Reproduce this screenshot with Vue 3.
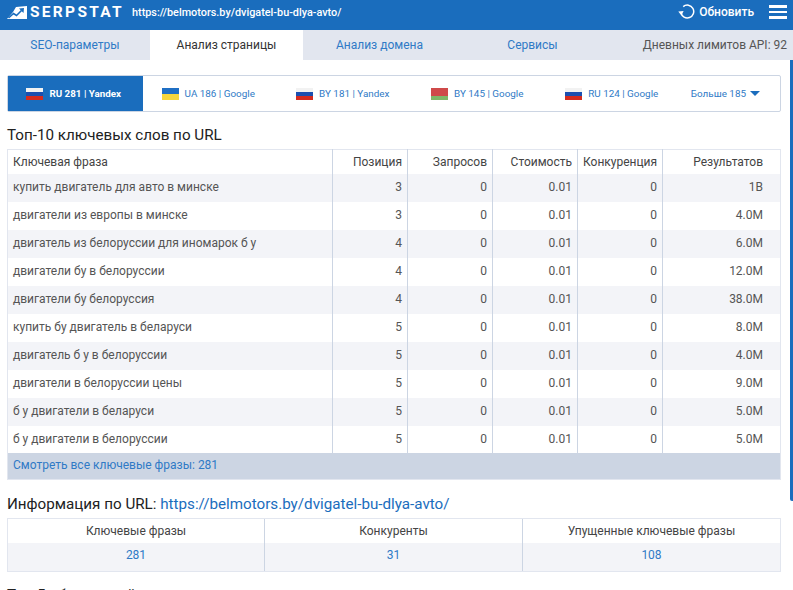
<script setup>
const flags = [
  { id: 'ua', label: 'UA 186 | Google', bands: ['#1f6fc4', '#f5d63d'] },
  { id: 'by1', label: 'BY 181 | Yandex', bands: ['#f2f2f2', '#1c4fb0', '#d52b1e'] },
  { id: 'by2', label: 'BY 145 | Google', bands: ['#cf4a4a', '#cf4a4a', '#7fb868'] },
  { id: 'ru', label: 'RU 124 | Google', bands: ['#f2f2f2', '#1c4fb0', '#d52b1e'] },
]
const rows = [
  ['купить двигатель для авто в минске', 3, '1B'],
  ['двигатели из европы в минске', 3, '4.0M'],
  ['двигатель из белоруссии для иномарок б у', 4, '6.0M'],
  ['двигатели бу в белоруссии', 4, '12.0M'],
  ['двигатели бу белоруссия', 4, '38.0M'],
  ['купить бу двигатель в беларуси', 5, '8.0M'],
  ['двигатель б у в белоруссии', 5, '4.0M'],
  ['двигатели в белоруссии цены', 5, '9.0M'],
  ['б у двигатели в беларуси', 5, '5.0M'],
  ['б у двигатели в белоруссии', 5, '5.0M'],
]
</script>

<template>
  <div class="page">
    <header class="top">
      <div class="logo">
        <svg class="logo-mark" width="20" height="13" viewBox="0 0 20 13">
          <path d="M0 13 L6 6 L9 1 L20 0 L20 13 Z" fill="#fff" />
          <path d="M1.5 12 L6.5 7.5 L9.5 9.5 L14.5 4.5" stroke="#1a6dbd" stroke-width="1.6" fill="none" />
          <path d="M12 2.5 L17 2 L16.5 7 Z" fill="#1a6dbd" />
        </svg>
        <span class="logo-text">SERPSTAT</span>
      </div>
      <span class="url">https://belmotors.by/dvigatel-bu-dlya-avto/</span>
      <div class="refresh">
        <svg width="17" height="16" viewBox="0 0 17 16" fill="none">
          <path d="M5.2 2.6 A6.4 6.4 0 1 1 3 8.6" stroke="#fff" stroke-width="1.5" />
          <path d="M0.3 7.4 L5.6 7 L3.4 11.6 Z" fill="#fff" />
        </svg>
        <span>Обновить</span>
      </div>
      <div class="burger"><i></i><i></i><i></i></div>
    </header>

    <nav class="tabs">
      <div class="tab t1">SEO-параметры</div>
      <div class="tab t2 active">Анализ страницы</div>
      <div class="tab t3">Анализ домена</div>
      <div class="tab t4">Сервисы</div>
      <div class="limits">Дневных лимитов API: 92</div>
    </nav>

    <main class="content">
      <div class="db">
        <div class="db-item current">
          <span class="flag">
            <i style="background:#f2f2f2"></i><i style="background:#1c4fb0"></i><i style="background:#d52b1e"></i>
          </span>
          <span>RU 281 | Yandex</span>
        </div>
        <div v-for="f in flags" :key="f.id" class="db-item">
          <span class="flag">
            <i v-for="(b, n) in f.bands" :key="n" :style="{ background: b }"></i>
          </span>
          <span>{{ f.label }}</span>
        </div>
        <div class="more">
          <span>Больше 185</span>
          <span class="caret"></span>
        </div>
      </div>

      <h2 class="h h1st">Топ-10 ключевых слов по URL</h2>
      <table class="kw">
        <colgroup>
          <col style="width:325px" /><col style="width:75px" /><col style="width:85px" />
          <col style="width:85px" /><col style="width:85px" /><col />
        </colgroup>
        <thead>
          <tr>
            <th class="l">Ключевая фраза</th>
            <th>Позиция</th>
            <th>Запросов</th>
            <th>Стоимость</th>
            <th>Конкуренция</th>
            <th class="res">Результатов</th>
          </tr>
        </thead>
        <tbody>
          <tr v-for="r in rows" :key="r[0]">
            <td class="l">{{ r[0] }}</td>
            <td>{{ r[1] }}</td>
            <td>0</td>
            <td>0.01</td>
            <td>0</td>
            <td class="res">{{ r[2] }}</td>
          </tr>
        </tbody>
        <tfoot>
          <tr><td colspan="6" class="l all">Смотреть все ключевые фразы: 281</td></tr>
        </tfoot>
      </table>

      <h2 class="h h2nd">Информация по URL: <a>https://belmotors.by/dvigatel-bu-dlya-avto/</a></h2>
      <div class="info">
        <div class="info-col"><div class="ih">Ключевые фразы</div><div class="iv">281</div></div>
        <div class="info-col"><div class="ih">Конкуренты</div><div class="iv">31</div></div>
        <div class="info-col"><div class="ih">Упущенные ключевые фразы</div><div class="iv">108</div></div>
      </div>

      <h2 class="h h3rd">Топ-5 объявлений</h2>
    </main>
    <div class="scroll"></div>
  </div>
</template>

<style>
html, body { margin: 0; overflow: hidden; background: #fff; }
</style>

<style scoped>
.page {
  position: relative;
  width: 793px;
  height: 590px;
  overflow: hidden;
  font-family: Roboto, "Liberation Sans", sans-serif;
  color: #333;
  background: #fff;
}
.top {
  box-sizing: border-box;
  height: 30px;
  padding-bottom: 6px;
  background: #1a6dbd;
  display: flex;
  align-items: center;
  color: #fff;
}
.logo { display: flex; align-items: center; margin-left: 7px; width: 125px; }
.logo-mark { flex: none; }
.logo-text {
  font-size: 15.5px;
  font-weight: 700;
  letter-spacing: 2.3px;
  margin-left: 3px;
  line-height: 24px;
}
.url { font-size: 10.85px; font-weight: 500; }
.refresh {
  margin-left: auto;
  display: flex;
  align-items: center;
  gap: 4px;
  font-size: 12px;
  font-weight: 500;
}
.burger { margin: 0 6px 0 15px; width: 18px; display: flex; flex-direction: column; gap: 3px; }
.burger i { display: block; height: 2.5px; background: #fff; }
.tabs {
  height: 30px;
  background: #e2e6ef;
  display: flex;
  align-items: center;
  font-size: 12px;
  color: #2f7ac6;
}
.tab { height: 30px; line-height: 30px; text-align: center; }
.t1 { width: 150px; }
.t2 { width: 153px; }
.t3 { width: 153px; }
.t4 { width: 153px; }
.active { background: #fff; color: #333; }
.limits { margin-left: auto; margin-right: 6px; color: #555; }
.content { padding: 15px 12px 0 7px; }
.db {
  box-sizing: border-box;
  height: 37px;
  border: 1px solid #ccd5e3;
  border-radius: 2px;
  display: flex;
  align-items: center;
  font-size: 9.9px;
  color: #2f7ac6;
}
.db-item {
  width: 134.5px;
  flex: none;
  display: flex;
  align-items: center;
  justify-content: center;
  gap: 6px;
  height: 35px;
  padding-right: 3px;
  box-sizing: border-box;
}
.current { background: #1a6dbd; color: #fff; font-weight: 700; font-size: 9.8px; }
.flag { width: 17px; height: 12px; display: flex; flex-direction: column; }
.flag i { flex: 1; display: block; }
.more { display: flex; align-items: center; gap: 4px; margin-left: auto; padding-right: 20px; }
.caret {
  width: 0;
  height: 0;
  border-left: 5px solid transparent;
  border-right: 5px solid transparent;
  border-top: 5px solid #1a6dbd;
}
.h { margin: 0; font-weight: 400; font-size: 15.2px; color: #222; line-height: 20px; }
.h1st { margin-top: 13px; }
.h2nd { margin-top: 14px; }
.h2nd a { color: #1a6dbd; }
.h3rd { margin-top: 13px; }
.kw {
  margin-top: 4px;
  width: 774px;
  table-layout: fixed;
  border-collapse: collapse;
  font-size: 12px;
  border: 1px solid #e2e6ef;
}
.kw th, .kw td {
  height: 28px;
  padding: 0 5px 2px;
  text-align: right;
  box-sizing: border-box;
  border-left: 1px solid #ccd5e3;
  color: #555;
}
.kw th { font-weight: 400; height: 24px; padding-bottom: 0; color: #444; }
.kw tbody tr:last-child td { height: 27px; padding-bottom: 0; }
.kw .l { text-align: left; border-left: 0; }
.kw .res { padding-right: 17px; }
.kw tbody tr:nth-child(odd) td { background: #f3f4f8; }
.kw .all { background: #ccd5e3; color: #2f7ac6; height: 27px; }
.info {
  margin-top: 4px;
  width: 774px;
  box-sizing: border-box;
  border: 1px solid #e2e6ef;
  display: grid;
  grid-template-columns: 256px 258px 1fr;
  font-size: 12px;
  text-align: center;
}
.info-col + .info-col { border-left: 1px solid #ccd5e3; }
.ih { height: 24px; line-height: 24px; color: #444; }
.iv { height: 28px; line-height: 25px; background: #f3f4f8; color: #2f7ac6; }
.scroll {
  position: absolute;
  right: 0;
  top: 60px;
  width: 3px;
  height: 441px;
  background: #1a6dbd;
  border-radius: 0 0 0 2px;
}
</style>
